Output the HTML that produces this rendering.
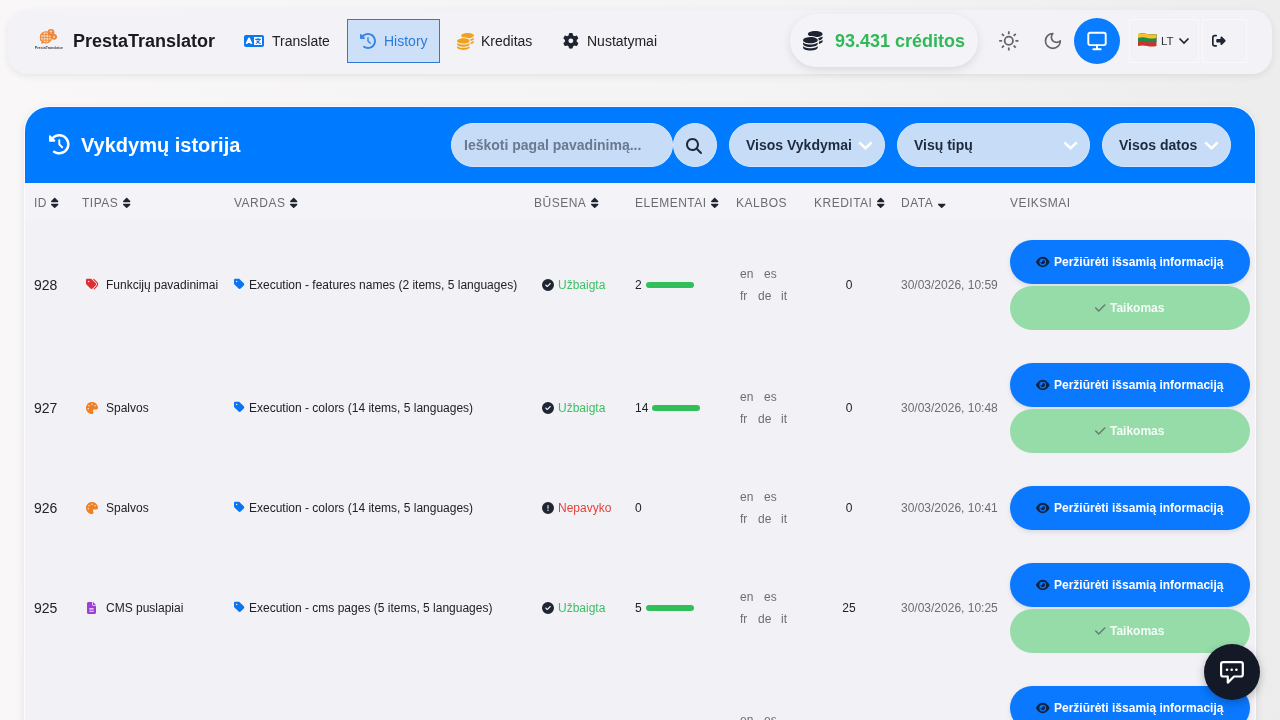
<!DOCTYPE html>
<html><head><meta charset="utf-8"><style>
*{box-sizing:border-box;margin:0;padding:0}
html,body{width:1280px;height:720px;overflow:hidden}
body{font-family:"Liberation Sans",sans-serif;background:linear-gradient(95deg,#f9f7f8 0%,#f4f4f4 55%,#ececed 100%);position:relative;color:#212529}
.abs{position:absolute}
svg{display:block;overflow:visible}
.t{position:absolute;white-space:nowrap}
body>*{will-change:transform}
#bar{left:8px;top:10px;width:1264px;height:64px;border-radius:20px;background:#f2f2f7;box-shadow:0 2px 7px rgba(0,0,0,.08)}
.brand{left:73px;top:31px;font-size:18px;font-weight:bold;color:#1b1b1f;line-height:21px}
.nav{font-size:14px;color:#222;line-height:16px;top:33px}
.active{left:347px;top:19px;width:93px;height:44px;border:1px solid #3079d6;background:#cde0f8}
#credits{left:790px;top:14px;width:188px;height:53px;border-radius:27px;background:#f3f3f8;box-shadow:0 3px 10px rgba(0,0,0,.10)}
.credtxt{left:835px;top:31px;font-size:18px;font-weight:bold;color:#31b857;line-height:21px}
#mon{left:1074px;top:18px;width:46px;height:46px;border-radius:50%;background:#0a7cff}
.box{top:19px;height:44px;border:1px solid #f9f9fc;border-radius:2px}
#card{left:24px;top:106px;width:1232px;height:640px;background:#f2f2f6;border:1px solid #fbfbfe;border-radius:25px 25px 0 0;box-shadow:0 2px 8px rgba(0,0,0,.09);overflow:hidden}
#cardhead{left:25px;top:107px;width:1230px;height:76px;background:#007bff;border-radius:24px 24px 0 0}
.title{left:81px;top:134px;font-size:20px;font-weight:bold;color:#fff;line-height:23px}
.pill{height:44px;top:123px;border-radius:22px;background:#c7ddf7;border:1px solid #d6e6fa}
.pilltxt{font-size:14px;font-weight:bold;color:#1e2a3b;line-height:16px;top:137px}
.thead{left:25px;top:183px;width:1230px;height:37px;background:#f4f4f8}
.th{top:196px;font-size:12px;letter-spacing:.5px;color:#6b6b70;line-height:15px}
.cell{font-size:12px;color:#222;line-height:14px}
.id{font-size:14px;color:#222;line-height:16px}
.lg{font-size:12px;color:#6c6c72;line-height:14px}
.date{font-size:12px;color:#6c6c72;line-height:14px}
.ok{color:#3cc064}
.fail{color:#e0433b}
.bar{height:6px;border-radius:3px;background:#30bf58}
.btnb{width:240px;height:44px;border-radius:22px;background:#0a78ff;box-shadow:0 2px 5px rgba(0,0,0,.10)}
.btng{width:240px;height:44px;border-radius:22px;background:#96dca9}
.btxt{font-size:12px;font-weight:bold;color:#fff;line-height:14px}
#chat{left:1204px;top:644px;width:56px;height:56px;border-radius:50%;background:#131926;box-shadow:0 3px 8px rgba(0,0,0,.25)}
</style></head>
<body>
<div id="bar" class="abs"></div>
<svg class="abs" style="left:28px;top:22px" width="42" height="34" viewBox="28 22 42 34">
<circle cx="45.9" cy="37.4" r="5.6" fill="#fbdcbc" stroke="#ec8535" stroke-width="1.1"/>
<path d="M41.6 41.2 L41.4 44 L44.6 42.6 Z" fill="#ec8535"/>
<g stroke="#ec8535" stroke-width=".85" fill="none"><path d="M40.5 34.6 H51.3 M40.5 37.4 H51.3 M40.5 40.2 H51.3 M43.1 32 V42.8 M45.9 31.8 V43 M48.7 32 V42.8"/></g>
<g fill="#ec8535"><circle cx="51" cy="32.3" r="3.4"/><circle cx="54.1" cy="36.8" r="2.9"/></g>
<path d="M49.4 31.3 H52.6 M51 30.2 V33.8 M53.2 38.2 L54.1 35.8 L55 38.2" stroke="#fde6cf" stroke-width=".7" fill="none"/>
<text x="34.8" y="48.9" font-size="3.9" font-family="Liberation Sans" font-weight="bold" fill="#3b3f48" textLength="28.2" lengthAdjust="spacingAndGlyphs">PrestaTranslator</text>
</svg>
<div class="t brand">PrestaTranslator</div>
<svg class="abs" style="left:244px;top:35px" width="20" height="12" viewBox="0 0 20 12"><rect x="0" y="0" width="20" height="12" rx="2" fill="#0a78f0"/><rect x="10" y="2" width="8" height="8" fill="#fff"/><path d="M2.4 8.8 L5 3.4 L7.6 8.8 M3.6 7.2 H6.4" stroke="#fff" stroke-width="1.8" fill="none" stroke-linejoin="round"/><path d="M11.2 4.4 H16.8 M14 3 V4.4 M15.8 4.4 Q14.8 7.6 11.8 8.8 M12.6 5.6 Q14.4 8 16.6 8.8" stroke="#0a78f0" stroke-width="1.1" fill="none"/></svg>
<div class="t nav" style="left:272px">Translate</div>
<div class="abs active"></div>
<svg class="abs" style="left:359.8px;top:32.5px" width="16.00" height="16.00" viewBox="0 0 512 512"><path fill="#3a86e8" d="M75 75L41 41C25.9 25.9 0 36.6 0 57.9V168c0 13.3 10.7 24 24 24H134.1c21.4 0 32.1-25.9 17-41l-30.8-30.8C155 85.5 203 64 256 64c106 0 192 86 192 192s-86 192-192 192c-40.8 0-78.6-12.7-109.7-34.4c-14.5-10.1-34.4-6.6-44.6 7.9s-6.6 34.4 7.9 44.6C151.2 495 201.7 512 256 512c141.4 0 256-114.6 256-256S397.4 0 256 0C185.3 0 121.3 28.7 75 75zm181 53c-13.3 0-24 10.7-24 24V256c0 6.4 2.5 12.5 7 17l72 72c9.4 9.4 24.6 9.4 33.9 0s9.4-24.6 0-33.9l-65-65V152c0-13.3-10.7-24-24-24z"/></svg>
<div class="t nav" style="left:384px;color:#2b7ae0">History</div>
<svg class="abs" style="left:456.6px;top:32.6px" width="16.90" height="16.90" viewBox="0 0 512 512"><path fill="#f0a11e" d="M512 80c0 18-14.3 34.6-38.4 48c-29.1 16.1-72.5 27.5-122.3 30.9c-3.7-1.8-7.4-3.5-11.3-5C300.6 137.4 248.2 128 192 128c-8.3 0-16.4 .2-24.5 .6l-1.1-.6C142.3 114.6 128 98 128 80c0-44.2 86-80 192-80S512 35.8 512 80zM160.7 161.1c10.2-.7 20.7-1.1 31.3-1.1c62.2 0 117.4 12.3 152.5 31.4C369.3 204.9 384 221.7 384 240c0 4-.7 7.9-2.1 11.7c-4.6 13.2-17 25.3-35 35.5c0 0 0 0 0 0c-.1 .1-.3 .1-.4 .2l0 0 0 0c-.3 .2-.6 .3-.9 .5c-35 19.4-90.8 32-153.6 32c-59.6 0-112.9-11.300-148.2-29.1c-1.9-.9-3.7-1.9-5.5-2.9C14.3 274.6 0 258 0 240c0-34.8 53.4-64.5 128-75.4c10.5-1.5 21.4-2.7 32.7-3.5zM416 240c0-21.9-10.6-39.9-24.1-53.4c28.300-4.4 54.2-11.4 76.2-20.5c16.3-6.8 31.5-15.2 43.9-25.5V176c0 19.3-16.5 37.1-43.8 50.9c-14.6 7.4-32.4 13.7-52.4 18.5c.1-1.8 .2-3.5 .2-5.300zm-32 96c0 18-14.3 34.6-38.4 48c-1.8 1-3.6 1.9-5.5 2.9C304.9 404.7 251.6 416 192 416c-62.8 0-118.6-12.6-153.6-32C14.3 370.6 0 354 0 336V300.6c12.5 10.3 27.6 18.7 43.9 25.5C83.4 342.6 135.8 352 192 352s108.6-9.4 148.1-25.9c7.8-3.2 15.3-6.9 22.4-10.9c6.1-3.4 11.8-7.2 17.2-11.2c1.5-1.1 2.9-2.3 4.3-3.4V304v5.7V336zm32 0V304 278.1c19-4.2 36.5-9.5 52.1-16c16.3-6.8 31.5-15.2 43.9-25.5V272c0 10.5-5 21-14.9 30.9c-16.3 16.3-45 29.7-81.3 38.4c.1-1.7 .2-3.5 .2-5.3zM192 448c56.2 0 108.6-9.4 148.1-25.9c16.3-6.8 31.5-15.2 43.9-25.5V432c0 44.2-86 80-192 80S0 476.2 0 432V396.6c12.5 10.3 27.6 18.7 43.9 25.5C83.4 438.6 135.8 448 192 448z"/></svg>
<div class="t nav" style="left:481px">Kreditas</div>
<svg class="abs" style="left:563.2px;top:33.1px" width="15.70" height="15.70" viewBox="0 0 512 512"><path fill="#1e2430" d="M495.9 166.6c3.2 8.7 .5 18.4-6.4 24.6l-43.3 39.4c1.1 8.3 1.7 16.8 1.7 25.4s-.6 17.1-1.7 25.4l43.3 39.4c6.9 6.2 9.6 15.9 6.4 24.6c-4.4 11.9-9.7 23.3-15.8 34.3l-4.7 8.1c-6.6 11-14 21.4-22.1 31.2c-5.9 7.2-15.7 9.6-24.5 6.8l-55.7-17.7c-13.4 10.3-28.2 18.9-44 25.4l-12.5 57.1c-2 9.1-9 16.3-18.2 17.8c-13.8 2.3-28 3.5-42.5 3.5s-28.7-1.2-42.5-3.5c-9.2-1.5-16.2-8.7-18.2-17.8l-12.5-57.1c-15.8-6.5-30.6-15.1-44-25.4L83.1 425.9c-8.8 2.8-18.6 .3-24.5-6.8c-8.1-9.8-15.5-20.2-22.1-31.2l-4.7-8.1c-6.1-11-11.4-22.4-15.8-34.3c-3.2-8.7-.5-18.4 6.4-24.6l43.3-39.4C64.6 273.1 64 264.6 64 256s.6-17.1 1.7-25.4L22.4 191.2c-6.9-6.2-9.6-15.9-6.4-24.6c4.4-11.9 9.7-23.3 15.8-34.3l4.7-8.1c6.6-11 14-21.4 22.1-31.2c5.9-7.2 15.7-9.6 24.5-6.8l55.7 17.7c13.4-10.3 28.2-18.9 44-25.4l12.5-57.1c2-9.1 9-16.300 18.2-17.8C227.3 1.2 241.5 0 256 0s28.7 1.2 42.5 3.5c9.2 1.5 16.2 8.7 18.2 17.8l12.5 57.1c15.8 6.5 30.6 15.1 44 25.4l55.7-17.7c8.8-2.8 18.6-.3 24.5 6.8c8.1 9.8 15.5 20.2 22.1 31.2l4.7 8.1c6.1 11 11.4 22.4 15.8 34.3zM256 336a80 80 0 1 0 0-160 80 80 0 1 0 0 160z"/></svg>
<div class="t nav" style="left:587px">Nustatymai</div>
<div id="credits" class="abs"></div>
<svg class="abs" style="left:803.2px;top:30.9px" width="19.60" height="19.60" viewBox="0 0 512 512"><path fill="#1d2430" d="M512 80c0 18-14.3 34.6-38.4 48c-29.1 16.1-72.5 27.5-122.3 30.9c-3.7-1.8-7.4-3.5-11.3-5C300.6 137.4 248.2 128 192 128c-8.3 0-16.4 .2-24.5 .6l-1.1-.6C142.3 114.6 128 98 128 80c0-44.2 86-80 192-80S512 35.8 512 80zM160.7 161.1c10.2-.7 20.7-1.1 31.3-1.1c62.2 0 117.4 12.3 152.5 31.4C369.3 204.9 384 221.7 384 240c0 4-.7 7.9-2.1 11.7c-4.6 13.2-17 25.3-35 35.5c0 0 0 0 0 0c-.1 .1-.3 .1-.4 .2l0 0 0 0c-.3 .2-.6 .3-.9 .5c-35 19.4-90.8 32-153.6 32c-59.6 0-112.9-11.300-148.2-29.1c-1.9-.9-3.7-1.9-5.5-2.9C14.3 274.6 0 258 0 240c0-34.8 53.4-64.5 128-75.4c10.5-1.5 21.4-2.7 32.7-3.5zM416 240c0-21.9-10.6-39.9-24.1-53.4c28.300-4.4 54.2-11.4 76.2-20.5c16.3-6.8 31.5-15.2 43.9-25.5V176c0 19.3-16.5 37.1-43.8 50.9c-14.6 7.4-32.4 13.7-52.4 18.5c.1-1.8 .2-3.5 .2-5.300zm-32 96c0 18-14.3 34.6-38.4 48c-1.8 1-3.6 1.9-5.5 2.9C304.9 404.7 251.6 416 192 416c-62.8 0-118.6-12.6-153.6-32C14.3 370.6 0 354 0 336V300.6c12.5 10.3 27.6 18.7 43.9 25.5C83.4 342.6 135.8 352 192 352s108.6-9.4 148.1-25.9c7.8-3.2 15.3-6.9 22.4-10.9c6.1-3.4 11.8-7.2 17.2-11.2c1.5-1.1 2.9-2.3 4.3-3.4V304v5.7V336zm32 0V304 278.1c19-4.2 36.5-9.5 52.1-16c16.3-6.8 31.5-15.2 43.9-25.5V272c0 10.5-5 21-14.9 30.9c-16.3 16.3-45 29.7-81.3 38.4c.1-1.7 .2-3.5 .2-5.3zM192 448c56.2 0 108.6-9.4 148.1-25.9c16.3-6.8 31.5-15.2 43.9-25.5V432c0 44.2-86 80-192 80S0 476.2 0 432V396.6c12.5 10.3 27.6 18.7 43.9 25.5C83.4 438.6 135.8 448 192 448z"/></svg>
<div class="t credtxt">93.431 créditos</div>
<svg class="abs" style="left:998.2px;top:30.2px" width="21.6" height="21.6" viewBox="0 0 24 24"><g stroke="#636368" stroke-width="2" fill="none"><circle cx="12" cy="12" r="4.6"/><path d="M12 1.3v3.3M12 19.4v3.3M4.3 4.3l2.3 2.3M17.4 17.4l2.3 2.3M1.3 12h3.3M19.4 12h3.3M6.6 17.4l-2.3 2.3M19.7 4.3l-2.3 2.3"/></g></svg>
<svg class="abs" style="left:1042.6px;top:30.6px" width="19.8" height="19.8" viewBox="0 0 24 24"><path d="M12 3a6 6 0 0 0 9 9 9 9 0 1 1-9-9Z" stroke="#636368" stroke-width="2" fill="none" stroke-linejoin="round"/></svg>
<div id="mon" class="abs"></div>
<svg class="abs" style="left:1086px;top:30px" width="22" height="22" viewBox="0 0 24 24"><g stroke="#fff" stroke-width="2.1" fill="none" stroke-linecap="round" stroke-linejoin="round"><rect x="2.5" y="3" width="19" height="13.5" rx="2"/><path d="M8 21h8M12 16.5V21"/></g></svg>
<div class="abs box" style="left:1129px;width:70px"></div>
<svg class="abs" style="left:1137.7px;top:33.3px" width="18.5" height="14" viewBox="0 0 18.5 14"><path d="M0 1 Q4.6 -0.10000000000000009 9.25 1 Q13.9 2.1 18.5 1 L18.5 13 Q13.9 14.1 9.25 13 Q4.6 11.9 0 13 Z" fill="#c8352f"/><path d="M0 1 Q4.6 -0.10000000000000009 9.25 1 Q13.9 2.1 18.5 1 L18.5 8.8 Q13.9 9.9 9.25 8.8 Q4.6 7.700000000000001 0 8.8 Z" fill="#1f8a4b"/><path d="M0 1 Q4.6 -0.10000000000000009 9.25 1 Q13.9 2.1 18.5 1 L18.5 4.9 Q13.9 6.0 9.25 4.9 Q4.6 3.8000000000000003 0 4.9 Z" fill="#f5c12e"/></svg>
<div class="t" style="left:1160.5px;top:33.5px;font-size:11.5px;color:#333;line-height:14px">LT</div>
<svg class="abs" style="left:1178px;top:37px" width="12" height="8" viewBox="0 0 12 8"><path d="M1.5 1.5 L6 6 L10.5 1.5" stroke="#222" stroke-width="1.6" fill="none"/></svg>
<div class="abs box" style="left:1202px;width:45px"></div>
<svg class="abs" style="left:1212.3px;top:34.4px" width="13.60" height="13.60" viewBox="0 0 512 512"><path fill="#1e2430" d="M377.9 105.9L500.7 228.7c7.2 7.2 11.3 17.1 11.3 27.3s-4.1 20.1-11.3 27.3L377.9 406.1c-6.4 6.4-15 9.9-24 9.9c-18.7 0-33.9-15.2-33.9-33.9l0-62.1-128 0c-17.7 0-32-14.3-32-32l0-64c0-17.7 14.3-32 32-32l128 0 0-62.1c0-18.7 15.2-33.9 33.9-33.9c9 0 17.6 3.6 24 9.9zM160 96L96 96c-17.7 0-32 14.3-32 32l0 256c0 17.7 14.3 32 32 32l64 0c17.7 0 32 14.3 32 32s-14.3 32-32 32l-64 0c-53 0-96-43-96-96L0 128C0 75 43 32 96 32l64 0c17.7 0 32 14.3 32 32s-14.3 32-32 32z"/></svg>
<div id="card" class="abs"></div>
<div id="cardhead" class="abs"></div>
<svg class="abs" style="left:48.6px;top:134px" width="20.60" height="20.60" viewBox="0 0 512 512"><path fill="#ffffff" d="M75 75L41 41C25.9 25.9 0 36.6 0 57.9V168c0 13.3 10.7 24 24 24H134.1c21.4 0 32.1-25.9 17-41l-30.8-30.8C155 85.5 203 64 256 64c106 0 192 86 192 192s-86 192-192 192c-40.8 0-78.6-12.7-109.7-34.4c-14.5-10.1-34.4-6.6-44.6 7.9s-6.6 34.4 7.9 44.6C151.2 495 201.7 512 256 512c141.4 0 256-114.6 256-256S397.4 0 256 0C185.3 0 121.3 28.7 75 75zm181 53c-13.3 0-24 10.7-24 24V256c0 6.4 2.5 12.5 7 17l72 72c9.4 9.4 24.6 9.4 33.9 0s9.4-24.6 0-33.9l-65-65V152c0-13.3-10.7-24-24-24z"/></svg>
<div class="t title">Vykdymų istorija</div>
<div class="abs pill" style="left:451px;width:222px"></div>
<div class="t pilltxt" style="left:464px;color:#6a7890">Ieškoti pagal pavadinimą...</div>
<div class="abs pill" style="left:673px;width:44px;border-radius:50%"></div>
<svg class="abs" style="left:686px;top:138px" width="16.00" height="16.00" viewBox="0 0 512 512"><path fill="#1e2a3b" d="M416 208c0 45.9-14.9 88.3-40 122.7L502.6 457.4c12.5 12.5 12.5 32.8 0 45.3s-32.8 12.5-45.3 0L330.7 376c-34.4 25.2-76.8 40-122.7 40C93.1 416 0 322.9 0 208S93.1 0 208 0S416 93.1 416 208zM208 352a144 144 0 1 0 0-288 144 144 0 1 0 0 288z"/></svg>
<div class="abs pill" style="left:729px;width:156px"></div>
<div class="t pilltxt" style="left:746px">Visos Vykdymai</div>
<svg class="abs" style="left:857.5px;top:141px" width="15" height="9" viewBox="0 0 15 9"><path d="M1.3 1.3 L7.5 7.2 L13.7 1.3" stroke="#fff" stroke-width="2.5" fill="none"/></svg>
<div class="abs pill" style="left:897px;width:193px"></div>
<div class="t pilltxt" style="left:914px">Visų tipų</div>
<svg class="abs" style="left:1062.5px;top:141px" width="15" height="9" viewBox="0 0 15 9"><path d="M1.3 1.3 L7.5 7.2 L13.7 1.3" stroke="#fff" stroke-width="2.5" fill="none"/></svg>
<div class="abs pill" style="left:1102px;width:129px"></div>
<div class="t pilltxt" style="left:1119px">Visos datos</div>
<svg class="abs" style="left:1203.5px;top:141px" width="15" height="9" viewBox="0 0 15 9"><path d="M1.3 1.3 L7.5 7.2 L13.7 1.3" stroke="#fff" stroke-width="2.5" fill="none"/></svg>
<div class="abs thead"></div>
<div class="t th" style="left:34px">ID</div>
<svg class="abs" style="left:51.3px;top:197px" width="7.40" height="11.84" viewBox="0 0 320 512"><path fill="#1e2430" d="M137.4 41.4c12.5-12.5 32.8-12.5 45.3 0l128 128c9.2 9.2 11.9 22.9 6.9 34.9s-16.6 19.8-29.6 19.8H32c-12.9 0-24.6-7.8-29.6-19.8s-2.2-25.7 6.9-34.9l128-128zm0 429.3l-128-128c-9.2-9.2-11.9-22.9-6.9-34.9s16.6-19.8 29.6-19.8H288c12.9 0 24.6 7.8 29.6 19.8s2.2 25.7-6.9 34.9l-128 128c-12.5 12.5-32.8 12.5-45.3 0z"/></svg>
<div class="t th" style="left:82px">TIPAS</div>
<svg class="abs" style="left:122.6px;top:197px" width="7.40" height="11.84" viewBox="0 0 320 512"><path fill="#1e2430" d="M137.4 41.4c12.5-12.5 32.8-12.5 45.3 0l128 128c9.2 9.2 11.9 22.9 6.9 34.9s-16.6 19.8-29.6 19.8H32c-12.9 0-24.6-7.8-29.6-19.8s-2.2-25.7 6.9-34.9l128-128zm0 429.3l-128-128c-9.2-9.2-11.9-22.9-6.9-34.9s16.6-19.8 29.6-19.8H288c12.9 0 24.6 7.8 29.6 19.8s2.2 25.7-6.9 34.9l-128 128c-12.5 12.5-32.8 12.5-45.3 0z"/></svg>
<div class="t th" style="left:234px">VARDAS</div>
<svg class="abs" style="left:289.8px;top:197px" width="7.40" height="11.84" viewBox="0 0 320 512"><path fill="#1e2430" d="M137.4 41.4c12.5-12.5 32.8-12.5 45.3 0l128 128c9.2 9.2 11.9 22.9 6.9 34.9s-16.6 19.8-29.6 19.8H32c-12.9 0-24.6-7.8-29.6-19.8s-2.2-25.7 6.9-34.9l128-128zm0 429.3l-128-128c-9.2-9.2-11.9-22.9-6.9-34.9s16.6-19.8 29.6-19.8H288c12.9 0 24.6 7.8 29.6 19.8s2.2 25.7-6.9 34.9l-128 128c-12.5 12.5-32.8 12.5-45.3 0z"/></svg>
<div class="t th" style="left:534px">BŪSENA</div>
<svg class="abs" style="left:590.6px;top:197px" width="7.40" height="11.84" viewBox="0 0 320 512"><path fill="#1e2430" d="M137.4 41.4c12.5-12.5 32.8-12.5 45.3 0l128 128c9.2 9.2 11.9 22.9 6.9 34.9s-16.6 19.8-29.6 19.8H32c-12.9 0-24.6-7.8-29.6-19.8s-2.2-25.7 6.9-34.9l128-128zm0 429.3l-128-128c-9.2-9.2-11.9-22.9-6.9-34.9s16.6-19.8 29.6-19.8H288c12.9 0 24.6 7.8 29.6 19.8s2.2 25.7-6.9 34.9l-128 128c-12.5 12.5-32.8 12.5-45.3 0z"/></svg>
<div class="t th" style="left:635px">ELEMENTAI</div>
<svg class="abs" style="left:710.9px;top:197px" width="7.40" height="11.84" viewBox="0 0 320 512"><path fill="#1e2430" d="M137.4 41.4c12.5-12.5 32.8-12.5 45.3 0l128 128c9.2 9.2 11.9 22.9 6.9 34.9s-16.6 19.8-29.6 19.8H32c-12.9 0-24.6-7.8-29.6-19.8s-2.2-25.7 6.9-34.9l128-128zm0 429.3l-128-128c-9.2-9.2-11.9-22.9-6.9-34.9s16.6-19.8 29.6-19.8H288c12.9 0 24.6 7.8 29.6 19.8s2.2 25.7-6.9 34.9l-128 128c-12.5 12.5-32.8 12.5-45.3 0z"/></svg>
<div class="t th" style="left:736px">KALBOS</div>
<div class="t th" style="left:814px">KREDITAI</div>
<svg class="abs" style="left:876.7px;top:197px" width="7.40" height="11.84" viewBox="0 0 320 512"><path fill="#1e2430" d="M137.4 41.4c12.5-12.5 32.8-12.5 45.3 0l128 128c9.2 9.2 11.9 22.9 6.9 34.9s-16.6 19.8-29.6 19.8H32c-12.9 0-24.6-7.8-29.6-19.8s-2.2-25.7 6.9-34.9l128-128zm0 429.3l-128-128c-9.2-9.2-11.9-22.9-6.9-34.9s16.6-19.8 29.6-19.8H288c12.9 0 24.6 7.8 29.6 19.8s2.2 25.7-6.9 34.9l-128 128c-12.5 12.5-32.8 12.5-45.3 0z"/></svg>
<div class="t th" style="left:901px">DATA</div>
<svg class="abs" style="left:937.5px;top:197px" width="7.40" height="11.84" viewBox="0 0 320 512"><path fill="#1e2430" d="M182.6 470.6c-12.5 12.5-32.8 12.5-45.3 0l-128-128c-9.2-9.2-11.9-22.9-6.9-34.9s16.6-19.8 29.6-19.8H288c12.9 0 24.6 7.8 29.6 19.8s2.2 25.7-6.9 34.9l-128 128z"/></svg>
<div class="t th" style="left:1010px">VEIKSMAI</div>
<div class="t id" style="left:34px;top:277px">928</div>
<svg class="abs" style="left:86px;top:278.2px" width="12.20" height="12.20" viewBox="0 0 512 512"><path fill="#dc3035" d="M345 39.1L472.8 168.4c52.4 53 52.4 138.2 0 191.2L360.8 472.9c-9.3 9.4-24.5 9.5-33.9 .2s-9.5-24.5-.2-33.9L438.6 325.9c33.9-34.3 33.9-89.4 0-123.7L310.9 72.9c-9.3-9.4-9.2-24.6 .2-33.9s24.6-9.2 33.9 .2zM0 229.5V80C0 53.5 21.5 32 48 32H197.5c17 0 33.3 6.7 45.3 18.7l168 168c25 25 25 65.5 0 90.5L277.3 442.7c-25 25-65.5 25-90.5 0l-168-168C6.7 262.7 0 246.5 0 229.5zM144 144a32 32 0 1 0 -64 0 32 32 0 1 0 64 0z"/></svg>
<div class="t cell" style="left:106px;top:278px">Funkcijų pavadinimai</div>
<svg class="abs" style="left:234px;top:278px" width="10.50" height="12.00" viewBox="0 0 448 512"><path fill="#0b74f0" d="M0 80V229.5c0 17 6.7 33.3 18.7 45.3l176 176c25 25 65.5 25 90.5 0L418.7 317.3c25-25 25-65.5 0-90.5l-176-176c-12-12-28.3-18.7-45.3-18.7H48C21.5 32 0 53.5 0 80zm112 32a32 32 0 1 1 0 64 32 32 0 1 1 0-64z"/></svg>
<div class="t cell" style="left:249px;top:278px">Execution - features names (2 items, 5 languages)</div>
<svg class="abs" style="left:542px;top:279px" width="12.00" height="12.00" viewBox="0 0 512 512"><path fill="#1e2533" d="M256 512A256 256 0 1 0 256 0a256 256 0 1 0 0 512zM369 209L241 337c-9.4 9.4-24.6 9.4-33.9 0l-64-64c-9.4-9.4-9.4-24.6 0-33.9s24.6-9.4 33.9 0l47 47L335 175c9.4-9.4 24.6-9.4 33.9 0s9.4 24.6 0 33.9z"/></svg>
<div class="t cell ok" style="left:558px;top:278px">Užbaigta</div>
<div class="t cell" style="left:635px;top:278px">2</div>
<div class="abs bar" style="left:646px;top:282px;width:48px"></div>
<div class="t lg" style="left:740px;top:267px">en</div><div class="t lg" style="left:764px;top:267px">es</div>
<div class="t lg" style="left:740px;top:289px">fr</div><div class="t lg" style="left:758px;top:289px">de</div><div class="t lg" style="left:781px;top:289px">it</div>
<div class="t cell" style="left:829px;width:40px;text-align:center;top:278px">0</div>
<div class="t date" style="left:901px;top:278px">30/03/2026, 10:59</div>
<div class="abs btnb" style="left:1010px;top:240px"></div>
<svg class="abs" style="left:1036px;top:256.3px" width="13.50" height="12.00" viewBox="0 0 576 512"><path fill="#10243f" d="M288 32c-80.8 0-145.5 36.8-192.6 80.6C48.6 156 17.3 208 2.5 243.7c-3.3 7.9-3.3 16.7 0 24.6C17.3 304 48.6 356 95.4 399.4C142.5 443.2 207.2 480 288 480s145.5-36.8 192.6-80.6c46.8-43.5 78.1-95.4 93-131.1c3.3-7.9 3.3-16.7 0-24.6c-14.9-35.7-46.2-87.7-93-131.1C433.5 68.8 368.8 32 288 32zM144 256a144 144 0 1 1 288 0 144 144 0 1 1 -288 0zm144-64c0 35.3-28.7 64-64 64c-7.1 0-13.9-1.2-20.3-3.3c-5.5-1.8-11.9 1.6-11.7 7.4c.3 6.9 1.3 13.8 3.2 20.7c13.7 51.2 66.4 81.6 117.6 67.9s81.6-66.4 67.9-117.6c-11.1-41.5-47.8-69.4-88.6-71.1c-5.8-.2-9.2 6.1-7.4 11.7c2.1 6.4 3.3 13.2 3.3 20.3z"/></svg>
<div class="t btxt" style="left:1054px;top:255px">Peržiūrėti išsamią informaciją</div>
<div class="abs btng" style="left:1010px;top:286px"></div>
<svg class="abs" style="left:1095px;top:302px" width="10.50" height="12.00" viewBox="0 0 448 512"><path fill="#6b7a72" d="M438.6 105.4c12.5 12.5 12.5 32.8 0 45.3l-256 256c-12.5 12.5-32.8 12.5-45.3 0l-128-128c-12.5-12.5-12.5-32.8 0-45.3s32.8-12.5 45.3 0L160 338.7 393.4 105.4c12.5-12.5 32.8-12.5 45.3 0z"/></svg>
<div class="t btxt" style="left:1110px;top:301px;color:#f4fbf6">Taikomas</div>
<div class="t id" style="left:34px;top:400px">927</div>
<svg class="abs" style="left:85.5px;top:402px" width="12.00" height="12.00" viewBox="0 0 512 512"><path fill="#f07f22" d="M512 256c0 .9 0 1.8 0 2.7c-.4 36.5-33.6 61.3-70.1 61.3H344c-26.5 0-48 21.5-48 48c0 3.4 .4 6.7 1 9.9c2.1 10.2 6.5 20 10.8 29.9c6.1 13.8 12.1 27.5 12.1 42c0 31.8-21.6 60.7-53.4 62c-3.5 .1-7 .2-10.6 .2C114.6 512 0 397.4 0 256S114.6 0 256 0S512 114.6 512 256zM128 288a32 32 0 1 0 -64 0 32 32 0 1 0 64 0zm0-96a32 32 0 1 0 0-64 32 32 0 1 0 0 64zM288 96a32 32 0 1 0 -64 0 32 32 0 1 0 64 0zm96 96a32 32 0 1 0 0-64 32 32 0 1 0 0 64z"/></svg>
<div class="t cell" style="left:106px;top:401px">Spalvos</div>
<svg class="abs" style="left:234px;top:401px" width="10.50" height="12.00" viewBox="0 0 448 512"><path fill="#0b74f0" d="M0 80V229.5c0 17 6.7 33.3 18.7 45.3l176 176c25 25 65.5 25 90.5 0L418.7 317.3c25-25 25-65.5 0-90.5l-176-176c-12-12-28.3-18.7-45.3-18.7H48C21.5 32 0 53.5 0 80zm112 32a32 32 0 1 1 0 64 32 32 0 1 1 0-64z"/></svg>
<div class="t cell" style="left:249px;top:401px">Execution - colors (14 items, 5 languages)</div>
<svg class="abs" style="left:542px;top:402px" width="12.00" height="12.00" viewBox="0 0 512 512"><path fill="#1e2533" d="M256 512A256 256 0 1 0 256 0a256 256 0 1 0 0 512zM369 209L241 337c-9.4 9.4-24.6 9.4-33.9 0l-64-64c-9.4-9.4-9.4-24.6 0-33.9s24.6-9.4 33.9 0l47 47L335 175c9.4-9.4 24.6-9.4 33.9 0s9.4 24.6 0 33.9z"/></svg>
<div class="t cell ok" style="left:558px;top:401px">Užbaigta</div>
<div class="t cell" style="left:635px;top:401px">14</div>
<div class="abs bar" style="left:652px;top:405px;width:48px"></div>
<div class="t lg" style="left:740px;top:390px">en</div><div class="t lg" style="left:764px;top:390px">es</div>
<div class="t lg" style="left:740px;top:412px">fr</div><div class="t lg" style="left:758px;top:412px">de</div><div class="t lg" style="left:781px;top:412px">it</div>
<div class="t cell" style="left:829px;width:40px;text-align:center;top:401px">0</div>
<div class="t date" style="left:901px;top:401px">30/03/2026, 10:48</div>
<div class="abs btnb" style="left:1010px;top:363px"></div>
<svg class="abs" style="left:1036px;top:379.3px" width="13.50" height="12.00" viewBox="0 0 576 512"><path fill="#10243f" d="M288 32c-80.8 0-145.5 36.8-192.6 80.6C48.6 156 17.3 208 2.5 243.7c-3.3 7.9-3.3 16.7 0 24.6C17.3 304 48.6 356 95.4 399.4C142.5 443.2 207.2 480 288 480s145.5-36.8 192.6-80.6c46.8-43.5 78.1-95.4 93-131.1c3.3-7.9 3.3-16.7 0-24.6c-14.9-35.7-46.2-87.7-93-131.1C433.5 68.8 368.8 32 288 32zM144 256a144 144 0 1 1 288 0 144 144 0 1 1 -288 0zm144-64c0 35.3-28.7 64-64 64c-7.1 0-13.9-1.2-20.3-3.3c-5.5-1.8-11.9 1.6-11.7 7.4c.3 6.9 1.3 13.8 3.2 20.7c13.7 51.2 66.4 81.6 117.6 67.9s81.6-66.4 67.9-117.6c-11.1-41.5-47.8-69.4-88.6-71.1c-5.8-.2-9.2 6.1-7.4 11.7c2.1 6.4 3.3 13.2 3.3 20.3z"/></svg>
<div class="t btxt" style="left:1054px;top:378px">Peržiūrėti išsamią informaciją</div>
<div class="abs btng" style="left:1010px;top:409px"></div>
<svg class="abs" style="left:1095px;top:425px" width="10.50" height="12.00" viewBox="0 0 448 512"><path fill="#6b7a72" d="M438.6 105.4c12.5 12.5 12.5 32.8 0 45.3l-256 256c-12.5 12.5-32.8 12.5-45.3 0l-128-128c-12.5-12.5-12.5-32.8 0-45.3s32.8-12.5 45.3 0L160 338.7 393.4 105.4c12.5-12.5 32.8-12.5 45.3 0z"/></svg>
<div class="t btxt" style="left:1110px;top:424px;color:#f4fbf6">Taikomas</div>
<div class="t id" style="left:34px;top:500px">926</div>
<svg class="abs" style="left:85.5px;top:502px" width="12.00" height="12.00" viewBox="0 0 512 512"><path fill="#f07f22" d="M512 256c0 .9 0 1.8 0 2.7c-.4 36.5-33.6 61.3-70.1 61.3H344c-26.5 0-48 21.5-48 48c0 3.4 .4 6.7 1 9.9c2.1 10.2 6.5 20 10.8 29.9c6.1 13.8 12.1 27.5 12.1 42c0 31.8-21.6 60.7-53.4 62c-3.5 .1-7 .2-10.6 .2C114.6 512 0 397.4 0 256S114.6 0 256 0S512 114.6 512 256zM128 288a32 32 0 1 0 -64 0 32 32 0 1 0 64 0zm0-96a32 32 0 1 0 0-64 32 32 0 1 0 0 64zM288 96a32 32 0 1 0 -64 0 32 32 0 1 0 64 0zm96 96a32 32 0 1 0 0-64 32 32 0 1 0 0 64z"/></svg>
<div class="t cell" style="left:106px;top:501px">Spalvos</div>
<svg class="abs" style="left:234px;top:501px" width="10.50" height="12.00" viewBox="0 0 448 512"><path fill="#0b74f0" d="M0 80V229.5c0 17 6.7 33.3 18.7 45.3l176 176c25 25 65.5 25 90.5 0L418.7 317.3c25-25 25-65.5 0-90.5l-176-176c-12-12-28.3-18.7-45.3-18.7H48C21.5 32 0 53.5 0 80zm112 32a32 32 0 1 1 0 64 32 32 0 1 1 0-64z"/></svg>
<div class="t cell" style="left:249px;top:501px">Execution - colors (14 items, 5 languages)</div>
<svg class="abs" style="left:542px;top:502px" width="12.00" height="12.00" viewBox="0 0 512 512"><path fill="#1e2533" d="M256 512A256 256 0 1 0 256 0a256 256 0 1 0 0 512zm0-384c13.3 0 24 10.7 24 24V264c0 13.3-10.7 24-24 24s-24-10.7-24-24V152c0-13.3 10.7-24 24-24zM224 352a32 32 0 1 1 64 0 32 32 0 1 1 -64 0z"/></svg>
<div class="t cell fail" style="left:558px;top:501px">Nepavyko</div>
<div class="t cell" style="left:635px;top:501px">0</div>
<div class="t lg" style="left:740px;top:490px">en</div><div class="t lg" style="left:764px;top:490px">es</div>
<div class="t lg" style="left:740px;top:512px">fr</div><div class="t lg" style="left:758px;top:512px">de</div><div class="t lg" style="left:781px;top:512px">it</div>
<div class="t cell" style="left:829px;width:40px;text-align:center;top:501px">0</div>
<div class="t date" style="left:901px;top:501px">30/03/2026, 10:41</div>
<div class="abs btnb" style="left:1010px;top:486px"></div>
<svg class="abs" style="left:1036px;top:502.3px" width="13.50" height="12.00" viewBox="0 0 576 512"><path fill="#10243f" d="M288 32c-80.8 0-145.5 36.8-192.6 80.6C48.6 156 17.3 208 2.5 243.7c-3.3 7.9-3.3 16.7 0 24.6C17.3 304 48.6 356 95.4 399.4C142.5 443.2 207.2 480 288 480s145.5-36.8 192.6-80.6c46.8-43.5 78.1-95.4 93-131.1c3.3-7.9 3.3-16.7 0-24.6c-14.9-35.7-46.2-87.7-93-131.1C433.5 68.8 368.8 32 288 32zM144 256a144 144 0 1 1 288 0 144 144 0 1 1 -288 0zm144-64c0 35.3-28.7 64-64 64c-7.1 0-13.9-1.2-20.3-3.3c-5.5-1.8-11.9 1.6-11.7 7.4c.3 6.9 1.3 13.8 3.2 20.7c13.7 51.2 66.4 81.6 117.6 67.9s81.6-66.4 67.9-117.6c-11.1-41.5-47.8-69.4-88.6-71.1c-5.8-.2-9.2 6.1-7.4 11.7c2.1 6.4 3.3 13.2 3.3 20.3z"/></svg>
<div class="t btxt" style="left:1054px;top:501px">Peržiūrėti išsamią informaciją</div>
<div class="t id" style="left:34px;top:600px">925</div>
<svg class="abs" style="left:87px;top:602px" width="9.00" height="12.00" viewBox="0 0 384 512"><path fill="#9b3fd6" d="M64 0C28.7 0 0 28.7 0 64V448c0 35.3 28.7 64 64 64H320c35.3 0 64-28.7 64-64V160H256c-17.7 0-32-14.3-32-32V0H64zM256 0V128H384L256 0zM112 256H272c8.8 0 16 7.2 16 16s-7.2 16-16 16H112c-8.8 0-16-7.2-16-16s7.2-16 16-16zm0 64H272c8.8 0 16 7.2 16 16s-7.2 16-16 16H112c-8.8 0-16-7.2-16-16s7.2-16 16-16zm0 64H272c8.8 0 16 7.2 16 16s-7.2 16-16 16H112c-8.8 0-16-7.2-16-16s7.2-16 16-16z"/></svg>
<div class="t cell" style="left:106px;top:601px">CMS puslapiai</div>
<svg class="abs" style="left:234px;top:601px" width="10.50" height="12.00" viewBox="0 0 448 512"><path fill="#0b74f0" d="M0 80V229.5c0 17 6.7 33.3 18.7 45.3l176 176c25 25 65.5 25 90.5 0L418.7 317.3c25-25 25-65.5 0-90.5l-176-176c-12-12-28.3-18.7-45.3-18.7H48C21.5 32 0 53.5 0 80zm112 32a32 32 0 1 1 0 64 32 32 0 1 1 0-64z"/></svg>
<div class="t cell" style="left:249px;top:601px">Execution - cms pages (5 items, 5 languages)</div>
<svg class="abs" style="left:542px;top:602px" width="12.00" height="12.00" viewBox="0 0 512 512"><path fill="#1e2533" d="M256 512A256 256 0 1 0 256 0a256 256 0 1 0 0 512zM369 209L241 337c-9.4 9.4-24.6 9.4-33.9 0l-64-64c-9.4-9.4-9.4-24.6 0-33.9s24.6-9.4 33.9 0l47 47L335 175c9.4-9.4 24.6-9.4 33.9 0s9.4 24.6 0 33.9z"/></svg>
<div class="t cell ok" style="left:558px;top:601px">Užbaigta</div>
<div class="t cell" style="left:635px;top:601px">5</div>
<div class="abs bar" style="left:646px;top:605px;width:48px"></div>
<div class="t lg" style="left:740px;top:590px">en</div><div class="t lg" style="left:764px;top:590px">es</div>
<div class="t lg" style="left:740px;top:612px">fr</div><div class="t lg" style="left:758px;top:612px">de</div><div class="t lg" style="left:781px;top:612px">it</div>
<div class="t cell" style="left:829px;width:40px;text-align:center;top:601px">25</div>
<div class="t date" style="left:901px;top:601px">30/03/2026, 10:25</div>
<div class="abs btnb" style="left:1010px;top:563px"></div>
<svg class="abs" style="left:1036px;top:579.3px" width="13.50" height="12.00" viewBox="0 0 576 512"><path fill="#10243f" d="M288 32c-80.8 0-145.5 36.8-192.6 80.6C48.6 156 17.3 208 2.5 243.7c-3.3 7.9-3.3 16.7 0 24.6C17.3 304 48.6 356 95.4 399.4C142.5 443.2 207.2 480 288 480s145.5-36.8 192.6-80.6c46.8-43.5 78.1-95.4 93-131.1c3.3-7.9 3.3-16.7 0-24.6c-14.9-35.7-46.2-87.7-93-131.1C433.5 68.8 368.8 32 288 32zM144 256a144 144 0 1 1 288 0 144 144 0 1 1 -288 0zm144-64c0 35.3-28.7 64-64 64c-7.1 0-13.9-1.2-20.3-3.3c-5.5-1.8-11.9 1.6-11.7 7.4c.3 6.9 1.3 13.8 3.2 20.7c13.7 51.2 66.4 81.6 117.6 67.9s81.6-66.4 67.9-117.6c-11.1-41.5-47.8-69.4-88.6-71.1c-5.8-.2-9.2 6.1-7.4 11.7c2.1 6.4 3.3 13.2 3.3 20.3z"/></svg>
<div class="t btxt" style="left:1054px;top:578px">Peržiūrėti išsamią informaciją</div>
<div class="abs btng" style="left:1010px;top:609px"></div>
<svg class="abs" style="left:1095px;top:625px" width="10.50" height="12.00" viewBox="0 0 448 512"><path fill="#6b7a72" d="M438.6 105.4c12.5 12.5 12.5 32.8 0 45.3l-256 256c-12.5 12.5-32.8 12.5-45.3 0l-128-128c-12.5-12.5-12.5-32.8 0-45.3s32.8-12.5 45.3 0L160 338.7 393.4 105.4c12.5-12.5 32.8-12.5 45.3 0z"/></svg>
<div class="t btxt" style="left:1110px;top:624px;color:#f4fbf6">Taikomas</div>
<div class="t id" style="left:34px;top:723px">924</div>
<svg class="abs" style="left:85.5px;top:725px" width="12.00" height="12.00" viewBox="0 0 512 512"><path fill="#f07f22" d="M512 256c0 .9 0 1.8 0 2.7c-.4 36.5-33.6 61.3-70.1 61.3H344c-26.5 0-48 21.5-48 48c0 3.4 .4 6.7 1 9.9c2.1 10.2 6.5 20 10.8 29.9c6.1 13.8 12.1 27.5 12.1 42c0 31.8-21.6 60.7-53.4 62c-3.5 .1-7 .2-10.6 .2C114.6 512 0 397.4 0 256S114.6 0 256 0S512 114.6 512 256zM128 288a32 32 0 1 0 -64 0 32 32 0 1 0 64 0zm0-96a32 32 0 1 0 0-64 32 32 0 1 0 0 64zM288 96a32 32 0 1 0 -64 0 32 32 0 1 0 64 0zm96 96a32 32 0 1 0 0-64 32 32 0 1 0 0 64z"/></svg>
<div class="t cell" style="left:106px;top:724px">Spalvos</div>
<svg class="abs" style="left:234px;top:724px" width="10.50" height="12.00" viewBox="0 0 448 512"><path fill="#0b74f0" d="M0 80V229.5c0 17 6.7 33.3 18.7 45.3l176 176c25 25 65.5 25 90.5 0L418.7 317.3c25-25 25-65.5 0-90.5l-176-176c-12-12-28.3-18.7-45.3-18.7H48C21.5 32 0 53.5 0 80zm112 32a32 32 0 1 1 0 64 32 32 0 1 1 0-64z"/></svg>
<div class="t cell" style="left:249px;top:724px">Execution - colors (14 items, 5 languages)</div>
<svg class="abs" style="left:542px;top:725px" width="12.00" height="12.00" viewBox="0 0 512 512"><path fill="#1e2533" d="M256 512A256 256 0 1 0 256 0a256 256 0 1 0 0 512zM369 209L241 337c-9.4 9.4-24.6 9.4-33.9 0l-64-64c-9.4-9.4-9.4-24.6 0-33.9s24.6-9.4 33.9 0l47 47L335 175c9.4-9.4 24.6-9.4 33.9 0s9.4 24.6 0 33.9z"/></svg>
<div class="t cell ok" style="left:558px;top:724px">Užbaigta</div>
<div class="t cell" style="left:635px;top:724px">14</div>
<div class="abs bar" style="left:652px;top:728px;width:48px"></div>
<div class="t lg" style="left:740px;top:713px">en</div><div class="t lg" style="left:764px;top:713px">es</div>
<div class="t lg" style="left:740px;top:735px">fr</div><div class="t lg" style="left:758px;top:735px">de</div><div class="t lg" style="left:781px;top:735px">it</div>
<div class="t cell" style="left:829px;width:40px;text-align:center;top:724px">0</div>
<div class="t date" style="left:901px;top:724px">30/03/2026, 10:20</div>
<div class="abs btnb" style="left:1010px;top:686px"></div>
<svg class="abs" style="left:1036px;top:702.3px" width="13.50" height="12.00" viewBox="0 0 576 512"><path fill="#10243f" d="M288 32c-80.8 0-145.5 36.8-192.6 80.6C48.6 156 17.3 208 2.5 243.7c-3.3 7.9-3.3 16.7 0 24.6C17.3 304 48.6 356 95.4 399.4C142.5 443.2 207.2 480 288 480s145.5-36.8 192.6-80.6c46.8-43.5 78.1-95.4 93-131.1c3.3-7.9 3.3-16.7 0-24.6c-14.9-35.7-46.2-87.7-93-131.1C433.5 68.8 368.8 32 288 32zM144 256a144 144 0 1 1 288 0 144 144 0 1 1 -288 0zm144-64c0 35.3-28.7 64-64 64c-7.1 0-13.9-1.2-20.3-3.3c-5.5-1.8-11.9 1.6-11.7 7.4c.3 6.9 1.3 13.8 3.2 20.7c13.7 51.2 66.4 81.6 117.6 67.9s81.6-66.4 67.9-117.6c-11.1-41.5-47.8-69.4-88.6-71.1c-5.8-.2-9.2 6.1-7.4 11.7c2.1 6.4 3.3 13.2 3.3 20.3z"/></svg>
<div class="t btxt" style="left:1054px;top:701px">Peržiūrėti išsamią informaciją</div>
<div class="abs btng" style="left:1010px;top:732px"></div>
<svg class="abs" style="left:1095px;top:748px" width="10.50" height="12.00" viewBox="0 0 448 512"><path fill="#6b7a72" d="M438.6 105.4c12.5 12.5 12.5 32.8 0 45.3l-256 256c-12.5 12.5-32.8 12.5-45.3 0l-128-128c-12.5-12.5-12.5-32.8 0-45.3s32.8-12.5 45.3 0L160 338.7 393.4 105.4c12.5-12.5 32.8-12.5 45.3 0z"/></svg>
<div class="t btxt" style="left:1110px;top:747px;color:#f4fbf6">Taikomas</div>
<div id="chat" class="abs"></div>
<svg class="abs" style="left:1220px;top:661px" width="24" height="24" viewBox="0 0 24 24"><path d="M3.1 1.1 H20.8 Q22.8 1.1 22.8 3.1 V13.5 Q22.8 15.5 20.8 15.5 H14 L7.8 21.6 V15.5 H3.1 Q1.1 15.5 1.1 13.5 V3.1 Q1.1 1.1 3.1 1.1 Z" stroke="#fff" stroke-width="2.2" fill="none" stroke-linejoin="round"/><circle cx="7" cy="8.8" r="1.3" fill="#fff"/><circle cx="11.7" cy="8.8" r="1.3" fill="#fff"/><circle cx="16.4" cy="8.8" r="1.3" fill="#fff"/></svg>
</body></html>
